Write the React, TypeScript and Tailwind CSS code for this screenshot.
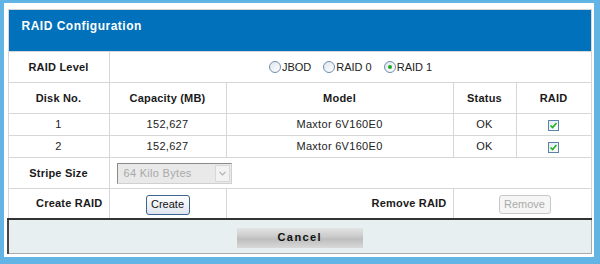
import React from 'react';

const font = { fontFamily: '"Liberation Sans", Arial, sans-serif' };

const Radio: React.FC<{ checked?: boolean; label: string }> = ({ checked, label }) => (
  <label className="flex items-center">
    <span className="w-[12px] h-[12px] rounded-full border border-[#6f8fb0] bg-gradient-to-br from-[#dfe6ee] to-white flex items-center justify-center">
      {checked && <span className="w-[4px] h-[4px] rounded-full bg-[#1faa1f]" />}
    </span>
    <span className="ml-[1px] text-[11px] text-[#222]">{label}</span>
  </label>
);

const Check: React.FC = () => (
  <span className="inline-flex w-[11px] h-[11px] border border-[#5b82a8] bg-gradient-to-br from-[#e4eaf0] to-white items-center justify-center align-middle">
    <svg width="9" height="9" viewBox="0 0 9 9">
      <path d="M1.5 4.5 L3.6 6.6 L7.5 2" fill="none" stroke="#1db41d" strokeWidth="1.6" />
    </svg>
  </span>
);

const td = 'border border-[#d6d6d6] text-center';
const label = 'text-[11px] font-bold text-[#1a1a1a] tracking-[0.2px]';

export default function App() {
  const disks = [
    { no: '1', cap: '152,627', model: 'Maxtor 6V160E0', status: 'OK' },
    { no: '2', cap: '152,627', model: 'Maxtor 6V160E0', status: 'OK' },
  ];

  return (
    <div className="w-[600px] h-[264px] bg-[#62b4e5] pt-[3px] pl-[4px]" style={font}>
      <div className="w-[590px] h-[254px] bg-white pt-[6px] pl-[3px]">
        <table className="w-[583px] table-fixed border-collapse">
          <colgroup>
            <col className="w-[101px]" />
            <col className="w-[117px]" />
            <col className="w-[227px]" />
            <col className="w-[63px]" />
            <col className="w-[75px]" />
          </colgroup>
          <tbody>
            <tr className="h-[42px]">
              <td colSpan={5} className="border border-[#d6d6d6] bg-[#0071ba] p-0">
                <div className="h-[41px] pl-[13px] pt-[9px]">
                  <span className="block text-[12px] leading-[14px] font-bold text-white tracking-[0.5px]">
                    RAID Configuration
                  </span>
                </div>
              </td>
            </tr>
            <tr className="h-[31px]">
              <td className={`${td} ${label}`}>RAID Level</td>
              <td colSpan={4} className={td}>
                <div className="flex justify-center gap-[12px] pl-[1px]">
                  <Radio label="JBOD" />
                  <Radio label="RAID 0" />
                  <Radio label="RAID 1" checked />
                </div>
              </td>
            </tr>
            <tr className="h-[31px]">
              <td className={`${td} ${label}`}>Disk No.</td>
              <td className={`${td} ${label}`}>Capacity (MB)</td>
              <td className={`${td} ${label}`}>Model</td>
              <td className={`${td} ${label}`}>Status</td>
              <td className={`${td} ${label}`}>RAID</td>
            </tr>
            {disks.map((d) => (
              <tr key={d.no} className="h-[22px] text-[11px] text-[#222] tracking-[0.3px]">
                <td className={td}>{d.no}</td>
                <td className={td}>{d.cap}</td>
                <td className={td}>{d.model}</td>
                <td className={td}>{d.status}</td>
                <td className={td}>
                  <Check />
                </td>
              </tr>
            ))}
            <tr className="h-[31px]">
              <td className={`${td} ${label}`}>Stripe Size</td>
              <td colSpan={4} className="border border-[#d6d6d6] pl-[7px]">
                <div className="w-[115px] h-[21px] flex items-center border border-t-[#8a8a8a] border-l-[#8a8a8a] border-r-[#d0d0d0] border-b-[#d0d0d0] bg-[#e9e9e9]">
                  <span className="flex-1 pl-[6px] text-[11px] text-[#a8a8a8] tracking-[0.3px]">64 Kilo Bytes</span>
                  <span className="w-[15px] h-[17px] mr-[1px] border border-[#d8d8d8] bg-[#f2f2f2] flex items-center justify-center">
                    <svg width="7" height="5" viewBox="0 0 7 5">
                      <path d="M0.5 0.8 L3.5 3.8 L6.5 0.8" fill="none" stroke="#b0b0b0" strokeWidth="1.2" />
                    </svg>
                  </span>
                </div>
              </td>
            </tr>
            <tr className="h-[30px]">
              <td className={`border border-[#d6d6d6] text-right pr-[6px] ${label}`}>Create RAID</td>
              <td className={td}>
                <button className="w-[44px] h-[20px] rounded-[3px] border border-[#3d6490] bg-gradient-to-b from-white to-[#dfe4ee] text-[11px] text-[#111]">
                  Create
                </button>
              </td>
              <td className={`border border-[#d6d6d6] text-right pr-[6px] ${label}`}>Remove RAID</td>
              <td colSpan={2} className={td}>
                <button className="w-[52px] h-[19px] ml-[5px] rounded-[3px] border border-[#c8c8c8] bg-[#f5f5f5] text-[11px] text-[#ababab]">
                  Remove
                </button>
              </td>
            </tr>
            <tr className="h-[35px]">
              <td
                colSpan={5}
                className="border-t-2 border-l-2 border-t-[#333] border-l-[#444] border-r border-b border-r-[#aaa] border-b-[#aaa] bg-[#e7eff1] text-center"
              >
                <div className="inline-flex w-[126px] h-[20px] items-center justify-center bg-[linear-gradient(to_bottom,#e4e4e4_0%,#c9c9c9_45%,#bdbdbd_55%,#d9d9d9_100%)] text-[11px] font-bold text-[#111] tracking-[1.4px]">
                  Cancel
                </div>
              </td>
            </tr>
          </tbody>
        </table>
      </div>
    </div>
  );
}
